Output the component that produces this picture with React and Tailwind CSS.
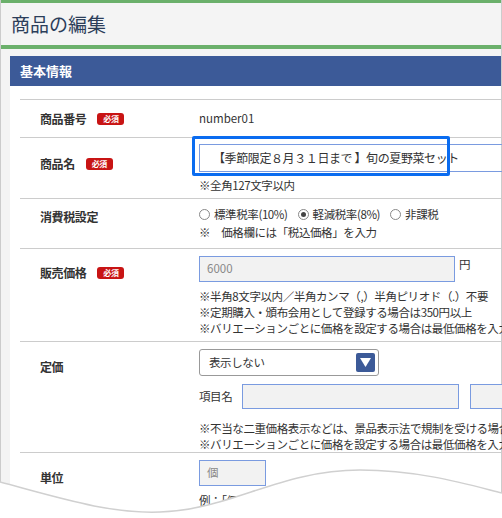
export default function App() {
  const f = { fontFamily: '"Noto Sans CJK JP", "Noto Sans", sans-serif' };
  const Req = () => (
    <span className="ml-[11px] inline-flex h-[12px] w-[27px] items-center justify-center rounded-[3px] bg-[#c81414] text-[8px] font-bold leading-none text-white">必須</span>
  );
  const Label = ({ children, req, pt }) => (
    <div className={"w-[179px] shrink-0 pl-[20px] text-[12px] font-bold text-[#333] flex items-center self-start " + pt}>{children}{req && <Req />}</div>
  );
  return (
    <div style={f} className="relative h-[518px] w-[502px] overflow-hidden bg-white">
      <div className="h-[518px] border-l border-r border-[#ccc] bg-[#f4f4f4]">
        <div className="h-[3px] bg-[#6bb06b]" />
        <div className="flex h-[42px] items-center pl-[10px] text-[19px] text-[#2c3e5a]">商品の編集</div>
        <div className="h-[4px] bg-[#6bb06b]" />
        <div className="ml-[9px] mt-[7px] bg-white">
          <div className="flex h-[30px] items-center bg-[#3c5a98] pl-[10px] text-[13px] font-bold text-white">基本情報</div>
          <div className="ml-[10px] mt-[13px] border-t border-[#ccc] text-[11.5px] tracking-[-0.4px] text-[#333]">
            <div className="flex h-[38px] items-center border-b border-[#ccc]">
              <Label req pt="pt-[10px]">商品番号</Label>
              <div className="tracking-normal">number01</div>
            </div>
            <div className="flex h-[61px] border-b border-[#ccc]">
              <Label req pt="pt-[17px]">商品名</Label>
              <div className="pt-[6px]">
                <div className="relative flex h-[28px] w-[400px] items-center border border-[#7a9be0] pl-[13px] text-[12px]">
                  【季節限定８月３１日まで 】旬の夏野菜セット
                  <div className="absolute left-[-8px] top-[-9px] h-[40px] w-[258px] rounded-[2px] border-[3px] border-[#0a6cf0]" />
                </div>
                <div className="mt-[5px]">※全角127文字以内</div>
              </div>
            </div>
            <div className="flex h-[50px] border-b border-[#ccc]">
              <Label pt="pt-[9px]">消費税設定</Label>
              <div className="pt-[7px]">
                <div className="flex items-center gap-[4px]">
                  <span className="h-[11px] w-[11px] rounded-full border border-[#888]" />標準税率(10%)
                  <span className="ml-[6px] flex h-[11px] w-[11px] items-center justify-center rounded-full border border-[#888]"><span className="h-[5px] w-[5px] rounded-full bg-[#444]" /></span>軽減税率(8%)
                  <span className="ml-[6px] h-[11px] w-[11px] rounded-full border border-[#888]" />非課税
                </div>
                <div className="mt-[1px]">※　価格欄には「税込価格」を入力</div>
              </div>
            </div>
            <div className="flex h-[93px] border-b border-[#ccc]">
              <Label req pt="pt-[15px]">販売価格</Label>
              <div className="pt-[7px]">
                <div className="flex items-start gap-[4px]">
                  <div className="flex h-[26px] w-[256px] items-center border border-[#7a9be0] bg-[#f2f2f2] pl-[7px] text-[#888] tracking-normal">6000</div>
                  <span>円</span>
                </div>
                <div className="mt-[6px] whitespace-nowrap leading-[16px]">
                  <div>※半角8文字以内／半角カンマ（,）半角ピリオド（.）不要</div>
                  <div>※定期購入・頒布会用として登録する場合は350円以上</div>
                  <div>※バリエーションごとに価格を設定する場合は最低価格を入力</div>
                </div>
              </div>
            </div>
            <div className="flex h-[111px] border-b border-[#ccc]">
              <Label pt="pt-[16px]">定価</Label>
              <div className="pt-[7px]">
                <div className="flex h-[27px] w-[180px] items-center justify-between rounded-[3px] border border-[#999] pl-[9px] pr-[3px]">
                  表示しない
                  <span className="flex h-[19px] w-[19px] items-center justify-center rounded-[2px] bg-[#3c5a98]">
                    <svg width="11" height="9" viewBox="0 0 11 9"><path d="M0 0h11L5.5 9z" fill="#fff" /></svg>
                  </span>
                </div>
                <div className="mt-[8px] flex items-center whitespace-nowrap">
                  <span className="w-[43px]">項目名</span>
                  <div className="h-[25px] w-[217px] border border-[#7a9be0] bg-[#f2f2f2]" />
                  <div className="ml-[11px] h-[25px] w-[40px] border border-[#7a9be0] bg-[#f2f2f2]" />
                </div>
                <div className="mt-[11px] whitespace-nowrap leading-[16px]">
                  <div>※不当な二重価格表示などは、景品表示法で規制を受ける場合があります</div>
                  <div>※バリエーションごとに価格を設定する場合は最低価格を入力</div>
                </div>
              </div>
            </div>
            <div className="flex h-[80px]">
              <Label pt="pt-[16px]">単位</Label>
              <div className="pt-[7px]">
                <div className="flex h-[26px] w-[67px] items-center border border-[#7a9be0] bg-[#f2f2f2] pl-[7px] text-[#888]">個</div>
                <div className="mt-[6px]">例：「個」</div>
              </div>
            </div>
          </div>
        </div>
      </div>
      <svg className="absolute left-0 top-[440px]" width="502" height="78" viewBox="0 0 502 78">
        <path d="M0 42 C60 58 110 74 160 72 C230 70 280 30 360 30 C420 30 470 45 502 53 L502 78 L0 78 Z" fill="#fff" />
        <path d="M0 42 C60 58 110 74 160 72 C230 70 280 30 360 30 C420 30 470 45 502 53" fill="none" stroke="#d0d0d0" strokeWidth="1.5" />
      </svg>
    </div>
  );
}
